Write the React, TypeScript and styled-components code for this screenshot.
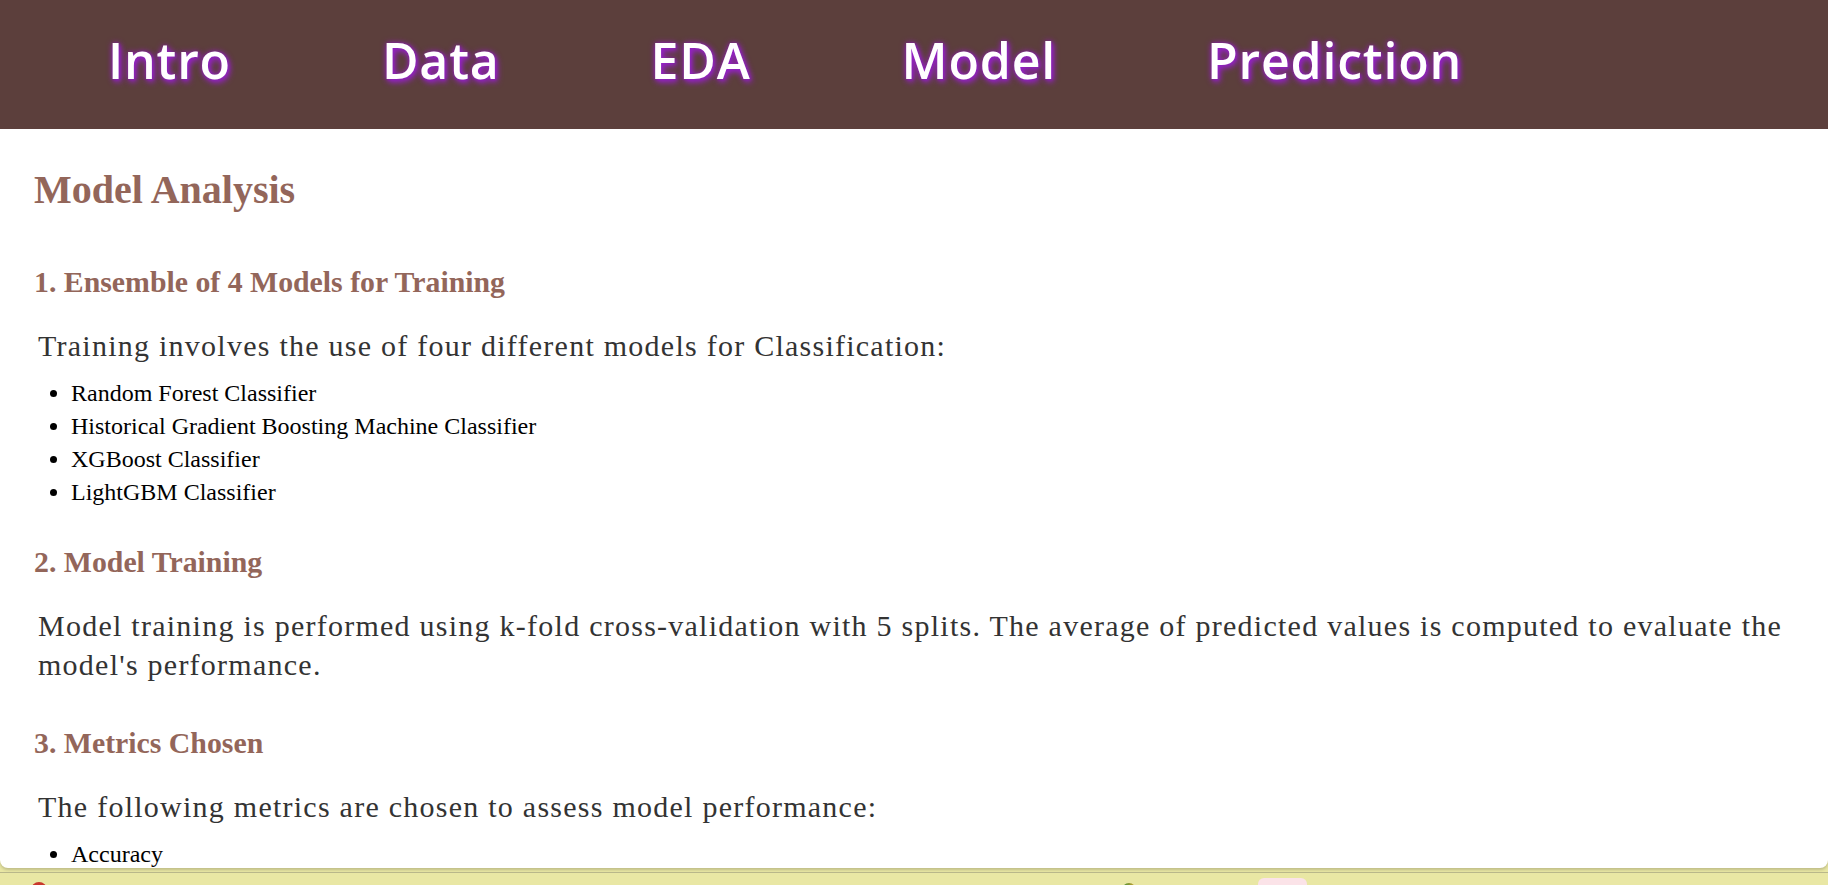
import React from "react";
import styled, { createGlobalStyle } from "styled-components";

const GlobalStyle = createGlobalStyle`
  html, body { margin: 0; padding: 0; height: 100%; }
  body { background: #e9e7a4; font-family: "Liberation Serif", "Times New Roman", serif; }
  #root { height: 100%; }
`;

const Screen = styled.div`
  height: 100vh;
  display: flex;
  flex-direction: column;
  background: #e9e7a4;
  overflow: hidden;
`;

const Card = styled.div`
  flex: 1;
  min-height: 0;
  overflow: hidden;
  background: #ffffff;
  border-radius: 0 0 8px 8px;
  box-shadow: 0 2px 3px rgba(0, 0, 0, 0.18);
  margin-bottom: 4px;
`;

const NavBar = styled.nav`
  height: 129px;
  background: #5c3f3c;
  display: flex;
  align-items: center;
  padding-left: 108px;
  gap: 151px;
  box-sizing: border-box;
`;

const NavLink = styled.a`
  font-family: "Open Sans", "Noto Sans", sans-serif;
  font-weight: 600;
  font-size: 50px;
  letter-spacing: 0.8px;
  color: #ffffff;
  text-decoration: none;
  text-shadow: 2px 3px 6px #9a22d0, 1px 1px 3px #7b1fa2, 0 0 6px #8e24aa;
  line-height: 1;
  margin-top: -10px;
`;

const Content = styled.main`
  padding: 0 34px;
`;

const Title = styled.h2`
  margin: 37px 0 0;
  font-size: 40px;
  font-weight: bold;
  color: #93665a;
  line-height: normal;
`;

const SectionTitle = styled.h3<{ $gap: number }>`
  margin: ${(p) => p.$gap}px 0 0;
  font-size: 29.8px;
  font-weight: bold;
  color: #93665a;
  line-height: normal;
`;

const Para = styled.p`
  margin: 27px 0 0;
  padding-left: 4px;
  font-size: 30px;
  line-height: 39px;
  letter-spacing: 1.25px;
  color: #333333;
`;

const List = styled.ul`
  margin: 12px 0 0;
  padding-left: 37px;
`;

const Item = styled.li`
  font-size: 24px;
  line-height: 33px;
  color: #000000;
`;

const Taskbar = styled.div`
  height: 12px;
  border-top: 1px solid #b9b78a;
  background: #e9e7a4;
  display: flex;
  align-items: flex-start;
  overflow: hidden;
`;

const RedDot = styled.span`
  width: 16px;
  height: 16px;
  border-radius: 50%;
  background: #c8382c;
  margin: 9px 0 0 31px;
  flex: none;
`;

const GreenDot = styled.span`
  width: 14px;
  height: 14px;
  border-radius: 50%;
  background: linear-gradient(90deg, #3a8f3a, #d9a12b);
  margin: 10px 0 0 1075px;
  flex: none;
`;

const PinkTab = styled.span`
  width: 49px;
  height: 20px;
  border-radius: 6px;
  background: #fbe3e8;
  margin: 5px 0 0 122px;
  flex: none;
`;

const models = [
  "Random Forest Classifier",
  "Historical Gradient Boosting Machine Classifier",
  "XGBoost Classifier",
  "LightGBM Classifier",
];

const metrics = ["Accuracy"];

export default function App() {
  return (
    <>
      <GlobalStyle />
      <Screen>
        <Card>
          <NavBar>
            {["Intro", "Data", "EDA", "Model", "Prediction"].map((l) => (
              <NavLink key={l} href="#">
                {l}
              </NavLink>
            ))}
          </NavBar>
          <Content>
            <Title>Model Analysis</Title>
            <SectionTitle $gap={52}>1. Ensemble of 4 Models for Training</SectionTitle>
            <Para>Training involves the use of four different models for Classification:</Para>
            <List>
              {models.map((m) => (
                <Item key={m}>{m}</Item>
              ))}
            </List>
            <SectionTitle $gap={36}>2. Model Training</SectionTitle>
            <Para>
              Model training is performed using k-fold cross-validation with 5 splits. The average of
              predicted values is computed to evaluate the model's performance.
            </Para>
            <SectionTitle $gap={42}>3. Metrics Chosen</SectionTitle>
            <Para>The following metrics are chosen to assess model performance:</Para>
            <List>
              {metrics.map((m) => (
                <Item key={m}>{m}</Item>
              ))}
            </List>
          </Content>
        </Card>
        <Taskbar>
          <RedDot />
          <GreenDot />
          <PinkTab />
        </Taskbar>
      </Screen>
    </>
  );
}
